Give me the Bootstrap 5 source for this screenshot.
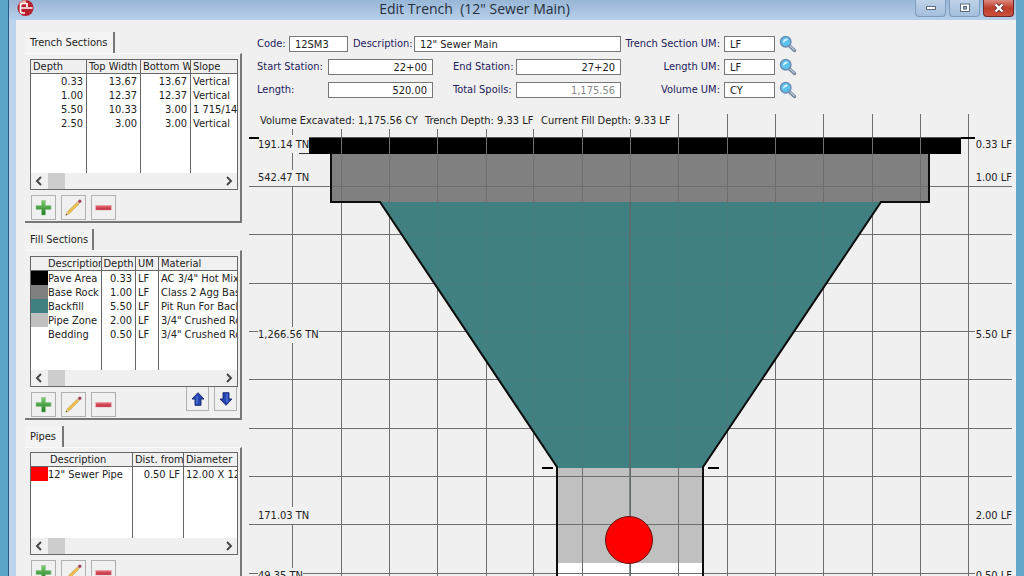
<!DOCTYPE html>
<html lang="en">
<head>
<meta charset="utf-8">
<meta name="viewport" content="width=device-width, initial-scale=1">
<title>Edit Trench (12" Sewer Main)</title>
<link href="https://cdn.jsdelivr.net/npm/bootstrap@5.3.0/dist/css/bootstrap.min.css" rel="stylesheet">
<style>
  body { font: 11px/14px "DejaVu Sans Condensed", "DejaVu Sans", sans-serif; color: #222; background: #f0f0f0; }
  .app-window { border-left: 8px solid #5ba5c9; border-right: 8px solid #64a8cb; }
  .app-frame { border-left: 1px solid #2c5a86; min-height: 0; }
  .frame-edge { width: 7px; background: #bdd3ec; }
  .title-strip { height: 20px; padding-left: 8px; padding-right: 2px; background: linear-gradient(#98b6d6, #b7cfea); }
  .title-text { font: 14px/18px "Open Sans", "Noto Sans", sans-serif; color: #24303c; white-space: pre; }
  .win-btns { gap: 3px; }
  .win-btn { width: 31px; height: 17px; padding: 0; border: 1px solid #7f9cbd; border-top: 0; border-radius: 0 0 4px 4px; background: linear-gradient(#bfd2e8, #a3bedc); display: flex; align-items: center; justify-content: center; }
  .win-btn.close-btn { background: linear-gradient(#dc8a7e, #bf3d2c 50%, #c9503c); border-color: #6e2a28; }
  .side-pane { width: 226px; padding: 12px 0 0 9px; }
  .tab-head { height: 21px; padding: 0 4px 0 5px; border: 0; border-right: 2px solid #777; background: #f3f3f3; color: #222; border-radius: 0; font-size: 11px; text-align: left; white-space: nowrap; }
  .tab-head.w-a { width: 90px; } .tab-head.w-b { width: 69px; } .tab-head.w-c { width: 39px; }
  .tab-box { height: 170px; margin-bottom: 6px; padding: 5px 2px 0 5px; border-top: 1px solid #fafafa; border-right: 2px solid #777; border-bottom: 2px solid #777; }
  .grid-box { height: 131px; border: 1px solid #666; background: #fff; }
  .grid-box.short-box { height: 103px; }
  .short-tab { padding-top: 4px; }
  .grid-area { min-height: 0; }
  .data-grid { table-layout: fixed; width: 100%; height: 100%; border-collapse: separate; border-spacing: 0; color: #222; }
  .data-grid th { height: 14px; padding: 0 2px; font-weight: 400; background: #f0f0f0; border-bottom: 1px solid #666; border-right: 1px solid #666; }
  .data-grid td { height: 14px; padding: 0 3px 0 2px; border-right: 1px solid #666; }
  .data-grid th, .data-grid td { white-space: nowrap; overflow: hidden; line-height: 13px; }
  .data-grid tr > :last-child { border-right: 0; padding-right: 0; }
  .data-grid .filler td { height: auto; }
  .data-grid .no-line { border-right: 0; }
  .data-grid .tight { padding: 0; }
  .hscroll { height: 16px; background: #f0f0f0; padding: 0 4px; }
  .hscroll button { padding: 0; border: 0; background: none; width: 8px; height: 16px; display: flex; align-items: center; }
  .hscroll .thumb { width: 17px; height: 16px; margin-left: 5px; background: #cdcdcd; }
  .tool-row { gap: 5px; padding: 5px 0 0 1px; }
  .tool-btn { width: 25px; height: 25px; padding: 0; border: 1px solid #b0b0b0; border-radius: 0; background: #f0f0f0; display: flex; align-items: center; justify-content: center; }
  .arrow-row { gap: 5px; padding-right: 1px; }
  .tool-btn.arrow-btn { width: 23px; height: 24px; border-top: 0; }
  .main-pane { min-width: 0; padding: 16px 2px 0 7px; }
  .form-left { width: 364px; margin-left: 8px; }
  .form-line { height: 16px; margin-bottom: 7px; }
  .form-line label { color: #23215c; white-space: nowrap; }
  .form-line input { height: 16px; padding: 0 5px; border: 1px solid #777; border-radius: 0; background: #fff; color: #222; font: inherit; min-width: 0; }
  .form-line input:disabled { color: #888; }
  .lab-code { width: 32px; } .lab-desc { width: 61px; } .lab-a { width: 71px; } .lab-b { width: 63px; } .lab-um { width: 99px; text-align: right; margin-right: 4px; }
  .fld-code { width: 59px; } .fld-num { width: 105px; text-align: right; } .fld-um { width: 51px; }
  .gap-a { margin-left: 5px; } .gap-b { margin-left: 20px; }
  .find-btn { width: 18px; height: 18px; padding: 0; margin-left: 4px; border: 0; background: none; display: flex; }
  .trench-chart { display: block; width: 100%; }
  .trench-chart text { font-family: "DejaVu Sans Condensed", "DejaVu Sans", sans-serif; font-size: 11px; fill: #222; white-space: pre; }
</style>
</head>
<body>
<svg width="0" height="0" class="position-absolute" aria-hidden="true">
  <defs>
    <linearGradient id="gGreen" x1="0" y1="0" x2="0" y2="1"><stop offset="0" stop-color="#7ecb6c"/><stop offset="1" stop-color="#1f7a26"/></linearGradient>
    <linearGradient id="gRed" x1="0" y1="0" x2="0" y2="1"><stop offset="0" stop-color="#e8707a"/><stop offset="1" stop-color="#b81f30"/></linearGradient>
    <symbol id="i-plus" viewBox="0 0 17 17"><path d="M6.500 1.500h4v5h5.500v4h-5.500v5.500h-4v-5.500H1v-4h5.500z" fill="url(#gGreen)" stroke="#8cc98a" stroke-width=".6"/></symbol>
    <symbol id="i-pen" viewBox="0 0 17 17"><path d="M.8 16.300 2 13.200 12.700 2.800l1.700 1.700L3.800 15z" fill="#efc04a" stroke="#c18f3a" stroke-width=".6"/><path d="M.8 16.300 2 13.200 3.800 15z" fill="#e8d2b0"/><path d="M.8 16.300l.5-1.500 1 1z" fill="#444"/><path d="M12.200 3.300l1.700 1.700 1-1-1.700-1.700z" fill="#c8ccd4"/><circle cx="14.800" cy="2.200" r="1.700" fill="#a8465a"/></symbol>
    <symbol id="i-minus" viewBox="0 0 17 17"><rect x=".8" y="6.500" width="15.400" height="4.500" fill="url(#gRed)" stroke="#e49aa2" stroke-width=".6"/></symbol>
    <symbol id="i-up" viewBox="0 0 14 14"><path d="M7 .7 13 7h-3v6.300H4V7H1z" fill="#2346b0" stroke="#14246e" stroke-width=".9"/><path d="M6 4v8" stroke="#5a7ae0" stroke-width="1.300"/></symbol>
    <symbol id="i-find" viewBox="0 0 18 18"><path d="M10 10.500l5.500 5" stroke="#75879a" stroke-width="3.400" stroke-linecap="round"/><path d="M10.500 10.500l4.600 4.300" stroke="#b9c8d6" stroke-width="1.200" stroke-linecap="round"/><circle cx="6.700" cy="6.700" r="5.200" fill="#5cc2ee" stroke="#6e8fb5" stroke-width="1.600"/><path d="M4 8a4 4 0 0 1 3.500-4.500c1 0 1.500.6 1 1.500C7 5.500 5.500 6.500 4 8z" fill="#d9f3fd"/></symbol>
    <symbol id="i-left" viewBox="0 0 8 10"><path d="M6 1 2 5l4 4" fill="none" stroke="#444" stroke-width="1.900"/></symbol>
    <symbol id="i-right" viewBox="0 0 8 10"><path d="M2 1l4 4-4 4" fill="none" stroke="#444" stroke-width="1.900"/></symbol>
  </defs>
</svg>

<div class="app-window vh-100 overflow-hidden">
  <div class="app-frame d-flex flex-column h-100">
    <header class="title-strip d-flex align-items-start flex-shrink-0">
      <svg width="17" height="17" viewBox="0 0 17 17" aria-hidden="true"><circle cx="8.500" cy="8" r="8" fill="#b8202c"/><path d="M1.500 5Q3 0 9 .2L9 4H5z" fill="#e9a9a6"/><path d="M9.500 3.500H6Q3.500 3.500 3.500 6V11q0 2 2 2h2.500M3.500 8h12M10 3v4" fill="none" stroke="#fff" stroke-width="1.700"/></svg>
      <div class="title-text flex-grow-1 text-center">Edit Trench  (12" Sewer Main)</div>
      <div class="win-btns d-flex">
        <button type="button" class="win-btn" aria-label="Minimize"><svg width="12" height="6"><rect x="1.500" y="1.500" width="9" height="3" fill="#fff" stroke="#5a6c80"/></svg></button>
        <button type="button" class="win-btn" aria-label="Restore"><svg width="12" height="10"><rect x="1.500" y="1" width="9" height="7.500" fill="#fff" stroke="#5a6c80"/><rect x="4.500" y="3.500" width="3" height="2.500" fill="#8fa9c7" stroke="#5a6c80"/></svg></button>
        <button type="button" class="win-btn close-btn" aria-label="Close"><svg width="12" height="10"><path d="M2.500 1.500l7 7M9.500 1.500l-7 7" stroke="#6b3030" stroke-width="4"/><path d="M2.500 1.500l7 7M9.500 1.500l-7 7" stroke="#fff" stroke-width="2.400"/></svg></button>
      </div>
    </header>

    <div class="d-flex flex-grow-1 overflow-hidden">
      <div class="frame-edge flex-shrink-0"></div>
      <aside class="side-pane flex-shrink-0">
        <section>
          <button type="button" class="tab-head w-a d-block">Trench Sections</button>
          <div class="tab-box">
            <div class="grid-box d-flex flex-column">
              <div class="grid-area flex-grow-1 overflow-hidden">
                <table class="data-grid">
                  <colgroup><col style="width:56px"><col style="width:54px"><col style="width:50px"><col></colgroup>
                  <thead><tr><th>Depth</th><th>Top Width</th><th>Bottom W</th><th>Slope</th></tr></thead>
                  <tbody>
                    <tr><td class="text-end">0.33</td><td class="text-end">13.67</td><td class="text-end">13.67</td><td>Vertical</td></tr>
                    <tr><td class="text-end">1.00</td><td class="text-end">12.37</td><td class="text-end">12.37</td><td>Vertical</td></tr>
                    <tr><td class="text-end">5.50</td><td class="text-end">10.33</td><td class="text-end">3.00</td><td>1 715/142</td></tr>
                    <tr><td class="text-end">2.50</td><td class="text-end">3.00</td><td class="text-end">3.00</td><td>Vertical</td></tr>
                    <tr class="filler"><td></td><td></td><td></td><td></td></tr>
                  </tbody>
                </table>
              </div>
              <div class="hscroll d-flex flex-shrink-0"><button type="button" aria-label="Scroll left"><svg width="8" height="10"><use href="#i-left"/></svg></button><div class="thumb"></div><button type="button" class="ms-auto" aria-label="Scroll right"><svg width="8" height="10"><use href="#i-right"/></svg></button></div>
            </div>
            <div class="tool-row d-flex">
              <button type="button" class="tool-btn" aria-label="Add"><svg width="17" height="17"><use href="#i-plus"/></svg></button>
              <button type="button" class="tool-btn" aria-label="Edit"><svg width="17" height="17"><use href="#i-pen"/></svg></button>
              <button type="button" class="tool-btn" aria-label="Remove"><svg width="17" height="17"><use href="#i-minus"/></svg></button>
            </div>
          </div>
        </section>

        <section>
          <button type="button" class="tab-head w-b d-block">Fill Sections</button>
          <div class="tab-box">
            <div class="grid-box d-flex flex-column">
              <div class="grid-area flex-grow-1 overflow-hidden">
                <table class="data-grid">
                  <colgroup><col style="width:17px"><col style="width:54px"><col style="width:34px"><col style="width:23px"><col></colgroup>
                  <thead><tr><th class="no-line"></th><th class="tight">Description</th><th class="tight text-center">Depth</th><th>UM</th><th>Material</th></tr></thead>
                  <tbody>
                    <tr><td class="no-line" style="background:#000"></td><td class="tight">Pave Area</td><td class="text-end">0.33</td><td>LF</td><td>AC 3/4" Hot Mix</td></tr>
                    <tr><td class="no-line" style="background:#808080"></td><td class="tight">Base Rock</td><td class="text-end">1.00</td><td>LF</td><td>Class 2 Agg Base</td></tr>
                    <tr><td class="no-line" style="background:#418080"></td><td class="tight">Backfill</td><td class="text-end">5.50</td><td>LF</td><td>Pit Run For Backfill</td></tr>
                    <tr><td class="no-line" style="background:#c0c0c0"></td><td class="tight">Pipe Zone</td><td class="text-end">2.00</td><td>LF</td><td>3/4" Crushed Rock</td></tr>
                    <tr><td class="no-line"></td><td class="tight">Bedding</td><td class="text-end">0.50</td><td>LF</td><td>3/4" Crushed Rock</td></tr>
                    <tr class="filler"><td class="no-line"></td><td></td><td></td><td></td><td></td></tr>
                  </tbody>
                </table>
              </div>
              <div class="hscroll d-flex flex-shrink-0"><button type="button" aria-label="Scroll left"><svg width="8" height="10"><use href="#i-left"/></svg></button><div class="thumb"></div><button type="button" class="ms-auto" aria-label="Scroll right"><svg width="8" height="10"><use href="#i-right"/></svg></button></div>
            </div>
            <div class="d-flex justify-content-between">
              <div class="tool-row d-flex">
                <button type="button" class="tool-btn" aria-label="Add"><svg width="17" height="17"><use href="#i-plus"/></svg></button>
                <button type="button" class="tool-btn" aria-label="Edit"><svg width="17" height="17"><use href="#i-pen"/></svg></button>
                <button type="button" class="tool-btn" aria-label="Remove"><svg width="17" height="17"><use href="#i-minus"/></svg></button>
              </div>
              <div class="arrow-row d-flex">
                <button type="button" class="tool-btn arrow-btn" aria-label="Move up"><svg width="14" height="14"><use href="#i-up"/></svg></button>
                <button type="button" class="tool-btn arrow-btn" aria-label="Move down"><svg width="14" height="14"><use href="#i-up" transform="rotate(180 7 7)"/></svg></button>
              </div>
            </div>
          </div>
        </section>

        <section>
          <button type="button" class="tab-head w-c d-block">Pipes</button>
          <div class="tab-box short-tab">
            <div class="grid-box short-box d-flex flex-column">
              <div class="grid-area flex-grow-1 overflow-hidden">
                <table class="data-grid">
                  <colgroup><col style="width:17px"><col style="width:85px"><col style="width:51px"><col></colgroup>
                  <thead><tr><th class="no-line"></th><th>Description</th><th>Dist. from</th><th>Diameter</th></tr></thead>
                  <tbody>
                    <tr><td class="no-line" style="background:#f00"></td><td class="tight">12" Sewer Pipe</td><td class="text-end">0.50 LF</td><td>12.00 X 12.00</td></tr>
                    <tr class="filler"><td class="no-line"></td><td></td><td></td><td></td></tr>
                  </tbody>
                </table>
              </div>
              <div class="hscroll d-flex flex-shrink-0"><button type="button" aria-label="Scroll left"><svg width="8" height="10"><use href="#i-left"/></svg></button><div class="thumb"></div><button type="button" class="ms-auto" aria-label="Scroll right"><svg width="8" height="10"><use href="#i-right"/></svg></button></div>
            </div>
            <div class="tool-row d-flex">
              <button type="button" class="tool-btn" aria-label="Add"><svg width="17" height="17"><use href="#i-plus"/></svg></button>
              <button type="button" class="tool-btn" aria-label="Edit"><svg width="17" height="17"><use href="#i-pen"/></svg></button>
              <button type="button" class="tool-btn" aria-label="Remove"><svg width="17" height="17"><use href="#i-minus"/></svg></button>
            </div>
          </div>
        </section>
      </aside>

      <main class="main-pane flex-grow-1">
        <form class="d-flex">
          <div class="form-left flex-shrink-0">
            <div class="form-line d-flex align-items-center">
              <label class="lab-code" for="code">Code:</label><input class="fld-code" id="code" type="text" value="12SM3">
              <label class="lab-desc gap-a" for="desc">Description:</label><input class="flex-grow-1" id="desc" type="text" value='12" Sewer Main'>
            </div>
            <div class="form-line d-flex align-items-center">
              <label class="lab-a" for="start">Start Station:</label><input class="fld-num" id="start" type="text" value="22+00">
              <label class="lab-b gap-b" for="end">End Station:</label><input class="fld-num" id="end" type="text" value="27+20">
            </div>
            <div class="form-line d-flex align-items-center">
              <label class="lab-a" for="len">Length:</label><input class="fld-num" id="len" type="text" value="520.00">
              <label class="lab-b gap-b" for="spoils">Total Spoils:</label><input class="fld-num" id="spoils" type="text" value="1,175.56" disabled>
            </div>
          </div>
          <div>
            <div class="form-line d-flex align-items-center">
              <label class="lab-um" for="um1">Trench Section UM:</label><input class="fld-um" id="um1" type="text" value="LF"><button type="button" class="find-btn" aria-label="Find section unit"><svg width="18" height="18"><use href="#i-find"/></svg></button>
            </div>
            <div class="form-line d-flex align-items-center">
              <label class="lab-um" for="um2">Length UM:</label><input class="fld-um" id="um2" type="text" value="LF"><button type="button" class="find-btn" aria-label="Find length unit"><svg width="18" height="18"><use href="#i-find"/></svg></button>
            </div>
            <div class="form-line d-flex align-items-center">
              <label class="lab-um" for="um3">Volume UM:</label><input class="fld-um" id="um3" type="text" value="CY"><button type="button" class="find-btn" aria-label="Find volume unit"><svg width="18" height="18"><use href="#i-find"/></svg></button>
            </div>
          </div>
        </form>

        <svg class="trench-chart" viewBox="249 105 765 490" role="img" aria-label="Trench cross-section">
          <!-- fill layers -->
          <rect x="309" y="138" width="652" height="16" fill="#000"/>
          <rect x="331" y="154" width="598" height="48" fill="#808080"/>
          <path d="M380 202H881L703 468H557z" fill="#418080"/>
          <rect x="557" y="468" width="146" height="95" fill="#c0c0c0"/>
          <rect x="557" y="563" width="146" height="32" fill="#fff"/>
          <!-- grid -->
          <path d="M292.500 129V595M341.500 129V595M389.500 129V595M437.500 129V595M486.500 129V595M533.500 129V595M582.500 129V595M630.500 129V595M678.500 114V595M727.500 114V595M775.500 114V595M823.500 114V595M872.500 114V595M920.500 114V595M968.500 114V595M249 186.500H1012M249 234.500H1012M249 283.500H1012M249 331.500H1012M249 379.500H1012M249 428.500H1012M249 476.500H1012M249 524.500H1012M249 573.500H1012" stroke="#6e6e6e" fill="none"/>
          <path d="M381 203H880L703 468H557z" fill="#418080" opacity=".75"/>
          <path d="M630 202V595" stroke="#606868" stroke-width="2" opacity=".7"/>
          <path d="M309 137.500H961" stroke="#555"/>
          <!-- walls -->
          <path d="M331 154V202H380L557 467V595M929 154V202H881L703 467V595" fill="none" stroke="#0c0c0c" stroke-width="2"/>
          <path d="M249 138H259M961 138H975M542 468H553M708 468H719" stroke="#000" stroke-width="2"/>
          <path d="M299 153.500H309" stroke="#333"/>
          <circle cx="629" cy="540" r="23.500" fill="#f00" stroke="#6a1010"/>
          <!-- label backgrounds keep the grid off the text -->
          <path d="M259 135H309V153H259zM259 170H309V186H259zM258 327H319V343H258zM259 507H309V524H259zM258 568H303V584H258zM975 139H1013V153H975zM975 327H1013V343H975zM975 568H1013V584H975z" fill="#f0f0f0"/>
          <text x="260" y="124">Volume Excavated: 1,175.56 CY</text>
          <text x="425" y="124">Trench Depth: 9.33 LF</text>
          <text x="541" y="124">Current Fill Depth: 9.33 LF</text>
          <text x="258" y="148">191.14 TN</text>
          <text x="258" y="181">542.47 TN</text>
          <text x="258" y="338">1,266.56 TN</text>
          <text x="258" y="519">171.03 TN</text>
          <text x="258" y="579">49.35 TN</text>
          <g text-anchor="end">
            <text x="1012" y="148">0.33 LF</text>
            <text x="1012" y="181">1.00 LF</text>
            <text x="1012" y="338">5.50 LF</text>
            <text x="1012" y="519">2.00 LF</text>
            <text x="1012" y="579">0.50 LF</text>
          </g>
        </svg>
      </main>
    </div>
  </div>
</div>
<script src="https://cdn.jsdelivr.net/npm/bootstrap@5.3.0/dist/js/bootstrap.bundle.min.js"></script>
</body>
</html>
